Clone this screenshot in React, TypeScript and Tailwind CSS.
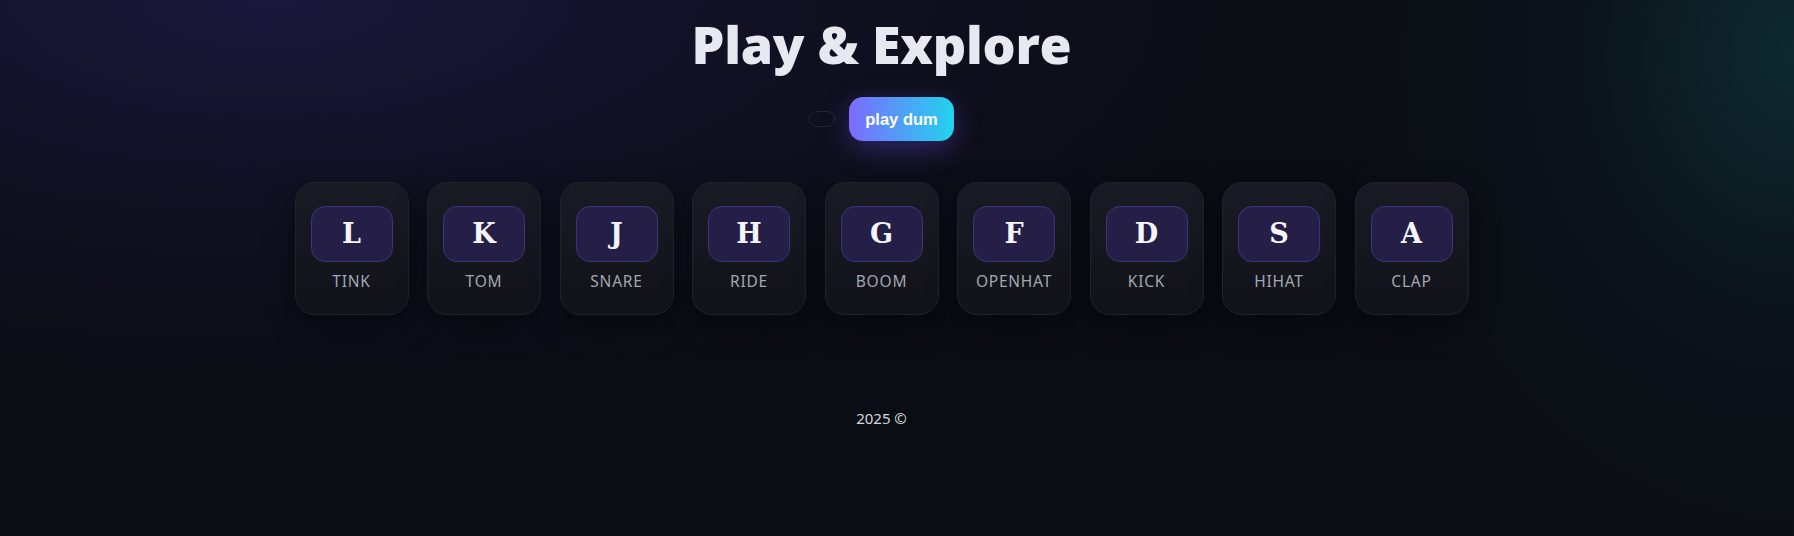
import React from "react";

const keys = [
  { k: "L", s: "TINK" },
  { k: "K", s: "TOM" },
  { k: "J", s: "SNARE" },
  { k: "H", s: "RIDE" },
  { k: "G", s: "BOOM" },
  { k: "F", s: "OPENHAT" },
  { k: "D", s: "KICK" },
  { k: "S", s: "HIHAT" },
  { k: "A", s: "CLAP" },
];

export default function App() {
  return (
    <div className="relative min-h-[536px] w-full overflow-hidden bg-[#0b0d14] bg-[image:radial-gradient(ellipse_70%_90%_at_15%_0%,rgba(40,30,90,0.55)_0%,rgba(30,25,70,0.25)_45%,transparent_80%),radial-gradient(ellipse_25%_100%_at_100%_10%,rgba(16,56,62,0.65)_0%,rgba(12,36,42,0.25)_50%,transparent_100%)] font-['Noto_Sans',sans-serif]">
      <div className="flex w-[1763px] flex-col items-center">
        <h1 className="mt-[14px] font-['Open_Sans',sans-serif] text-[52px] font-extrabold leading-[60px] tracking-[-0.005em] text-[#e8e8f0]">
          Play &amp; Explore
        </h1>
        <div className="mt-[23px] flex items-center gap-[14px]">
          <div className="h-[16px] w-[26px] rounded-full border border-[#262630]" />
          <button className="h-[44px] rounded-[14px] bg-[image:linear-gradient(90deg,#7c6bff,#22d3ee)] px-[16px] font-['Liberation_Sans',sans-serif] text-[16.5px] font-bold text-white shadow-[0_8px_28px_rgba(110,80,240,0.35)]">
            play dum
          </button>
        </div>
        <div className="mt-[41px] flex gap-[18.5px]">
          {keys.map((x) => (
            <div
              key={x.k}
              className="flex h-[133px] w-[114px] flex-col items-center rounded-[20px] border border-[#22222b] bg-[image:linear-gradient(180deg,#1a1a24,#111319)] px-[16px] pt-[23px] shadow-[0_10px_30px_rgba(0,0,0,0.45)]"
            >
              <div className="flex h-[56px] w-[82px] items-center justify-center rounded-[14px] border border-[#3d3480] bg-[#251f47] font-['DejaVu_Serif',serif] text-[27px] font-bold text-[#f4f4fa]">
                {x.k}
              </div>
              <div className="mt-[9px] text-[15.5px] leading-[20px] tracking-[0.05em] text-[#a3a7b0]">
                {x.s}
              </div>
            </div>
          ))}
        </div>
        <div className="mt-[93px] text-[15px] leading-[20px] text-[#d4d7de]">2025 ©</div>
      </div>
    </div>
  );
}
